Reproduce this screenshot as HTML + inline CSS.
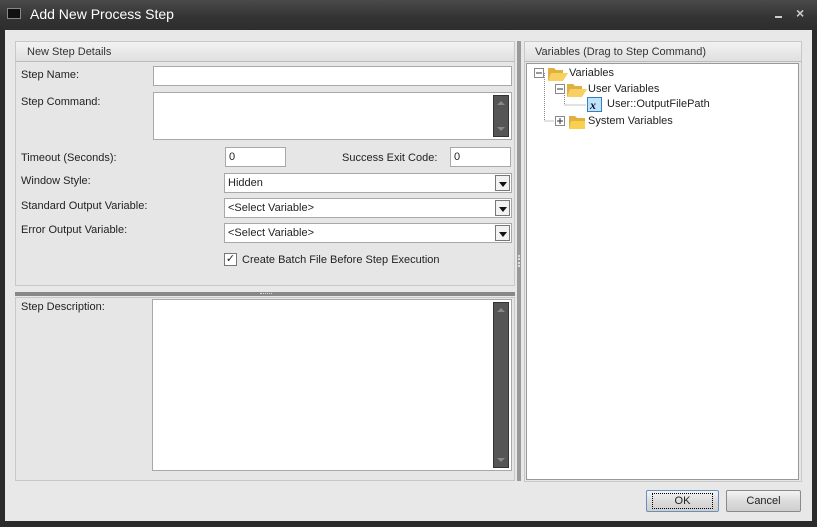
<!DOCTYPE html><html><head><style>
*{box-sizing:border-box;margin:0;padding:0}
body{width:817px;height:527px;background:#2b2b2b;font-family:"Liberation Sans",sans-serif;font-size:11px;color:#222;position:relative;overflow:hidden}
.a{position:absolute}
.tb{left:0;top:0;width:817px;height:30px;background:linear-gradient(#4a4a4a,#333 60%,#2d2d2d)}
.body{left:5px;top:30px;width:807px;height:491px;background:#e8e8e8}
.inp{position:absolute;background:#fff;border:1px solid #a8a8a8}
.lbl{position:absolute;font-size:11px;color:#222}
.dd{position:absolute;right:1px;top:1px;width:15px;bottom:1px;border:1px solid #777;background:#f2f2f2}
.dd:after{content:"";position:absolute;left:3px;top:6px;border-left:4px solid transparent;border-right:4px solid transparent;border-top:5px solid #111}
.hdr{background:linear-gradient(#f2f2f2,#e0e0e0);border:1px solid #c8c8c8;border-bottom:1px solid #bbb;font-size:11px;padding:4px 10px;color:#333}
.sb{position:absolute;right:2px;top:2px;bottom:2px;width:16px;background:#555;border:1px solid #333}
.sb:before{content:"";position:absolute;left:3px;top:5px;border-left:4px solid transparent;border-right:4px solid transparent;border-bottom:4px solid #888}
.sb:after{content:"";position:absolute;left:3px;bottom:5px;border-left:4px solid transparent;border-right:4px solid transparent;border-top:4px solid #888}
.btn{position:absolute;height:22px;border:1px solid #8a8a8a;border-radius:2px;background:linear-gradient(#f4f4f4,#dcdcdc 50%,#cfcfcf);text-align:center;line-height:20px;font-size:11px}
</style></head><body>
<div class="a tb">
 <div class="a" style="left:7px;top:8px;width:14px;height:11px;background:#111;border:1px solid #888"></div>
 <div class="a" style="left:30px;top:6px;color:#fff;font-size:14px">Add New Process Step</div>
 <div class="a" style="left:775px;top:16px;width:7px;height:2px;background:#ccc"></div>
 <div class="a" style="left:796px;top:5px;color:#ccc;font-size:14px;font-weight:bold">×</div>
</div>
<div class="a body"></div>
<div class="a" style="left:15px;top:41px;width:500px;height:245px;border:1px solid #c8c8c8;background:#e6e6e6"></div>
<div class="a hdr" style="left:15px;top:41px;width:500px;height:21px;padding-left:11px">New Step Details</div>
<div class="lbl" style="left:21px;top:69px">Step Name:</div>
<div class="inp" style="left:153px;top:66px;width:359px;height:20px"></div>
<div class="lbl" style="left:21px;top:96px">Step Command:</div>
<div class="inp" style="left:153px;top:92px;width:359px;height:48px"><div class="sb"></div></div>
<div class="lbl" style="left:21px;top:152px">Timeout (Seconds):</div>
<div class="inp" style="left:225px;top:147px;width:61px;height:20px;padding:3px">0</div>
<div class="lbl" style="left:342px;top:152px">Success Exit Code:</div>
<div class="inp" style="left:450px;top:147px;width:61px;height:20px;padding:3px">0</div>
<div class="lbl" style="left:21px;top:175px">Window Style:</div>
<div class="inp" style="left:224px;top:173px;width:288px;height:20px;padding:3px">Hidden<div class="dd"></div></div>
<div class="lbl" style="left:21px;top:200px">Standard Output Variable:</div>
<div class="inp" style="left:224px;top:198px;width:288px;height:20px;padding:3px">&lt;Select Variable&gt;<div class="dd"></div></div>
<div class="lbl" style="left:21px;top:224px">Error Output Variable:</div>
<div class="inp" style="left:224px;top:223px;width:288px;height:20px;padding:3px">&lt;Select Variable&gt;<div class="dd"></div></div>
<div class="a" style="left:224px;top:253px;width:13px;height:13px;border:1px solid #777;background:#fff;font-size:11px;line-height:11px;text-align:center">✓</div>
<div class="lbl" style="left:242px;top:254px">Create Batch File Before Step Execution</div>
<div class="a" style="left:15px;top:292px;width:500px;height:4px;background:#888"></div>
<div class="a" style="left:260px;top:293px;width:12px;height:1px;border-top:1px dotted #ddd"></div>
<div class="a" style="left:15px;top:297px;width:500px;height:184px;border:1px solid #c8c8c8;background:#e6e6e6"></div>
<div class="lbl" style="left:21px;top:301px">Step Description:</div>
<div class="inp" style="left:152px;top:299px;width:360px;height:172px"><div class="sb"></div></div>
<div class="a" style="left:517px;top:41px;width:4px;height:440px;background:#999"></div>
<div class="a" style="left:518px;top:255px;width:2px;height:12px;border-left:2px dotted #ddd"></div>
<div class="a" style="left:524px;top:41px;width:278px;height:441px;border:1px solid #c8c8c8;background:#e6e6e6"></div>
<div class="a hdr" style="left:524px;top:41px;width:278px;height:21px">Variables (Drag to Step Command)</div>
<div class="a" style="left:526px;top:63px;width:273px;height:417px;background:#fff;border:1px solid #999"></div>
<svg class="a" style="left:526px;top:63px" width="200" height="70">
<g stroke="#888" stroke-dasharray="1,1" fill="none"><path d="M18.5 10V58M18.5 58H28M38.5 26V42M38.5 42H60M27 10H22M46 26H42"/></g>
<rect x="8.5" y="5.5" width="9" height="9" fill="#fff" stroke="#888"/><path d="M10 10h6" stroke="#333"/>
<rect x="29.5" y="21.5" width="9" height="9" fill="#fff" stroke="#888"/><path d="M31 26h6" stroke="#333"/>
<rect x="29.5" y="53.5" width="9" height="9" fill="#fff" stroke="#888"/><path d="M31 58h6M34 55v6" stroke="#333"/>
<path d="M22 5h6l2 2h7v3H27l-5 8z" fill="#e0b040"/><path d="M25 10h17l-5 8H22z" fill="#f6d060"/>
<path d="M41 21h6l2 2h7v3H46l-5 8z" fill="#e0b040"/><path d="M44 26h17l-5 8H41z" fill="#f6d060"/>
<path d="M43 53h6l2 2h8v11H43z" fill="#e0b040"/><path d="M45 58h14v8H43z" fill="#f8d050"/>
<rect x="61.5" y="34.5" width="14" height="14" fill="#bfe4f8" stroke="#3a7cc0"/>
<text x="64" y="46" font-size="12" font-style="italic" font-weight="bold" fill="#113" font-family="Liberation Serif">x</text>
</svg>
<div class="lbl" style="left:569px;top:67px">Variables</div>
<div class="lbl" style="left:588px;top:83px">User Variables</div>
<div class="lbl" style="left:607px;top:98px">User::OutputFilePath</div>
<div class="lbl" style="left:588px;top:115px">System Variables</div>
<div class="btn" style="left:646px;top:490px;width:73px;border-color:#6a8fb8"><span style="border:1px dotted #000;padding:1px 22px">OK</span></div>
<div class="btn" style="left:726px;top:490px;width:75px">Cancel</div>
</body></html>
